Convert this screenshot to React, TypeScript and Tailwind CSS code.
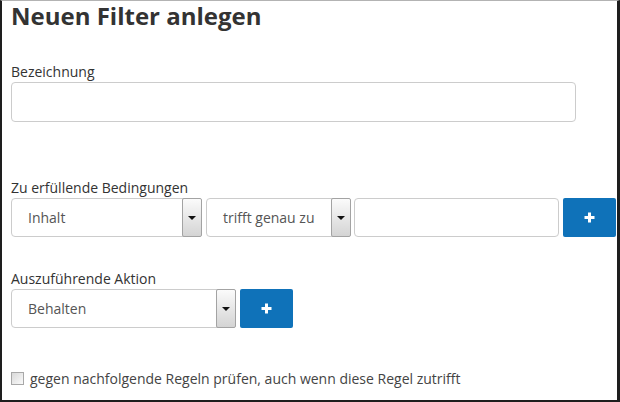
import type { ReactNode } from 'react';

function Arrow() {
  return (
    <div className="-my-px -mr-px flex w-[20px] items-center justify-center rounded-[2px] border border-[#a3a3a3] bg-linear-to-b from-[#fbfbfb] to-[#d4d4d4]">
      <div className="h-0 w-0 border-x-[4px] border-t-[4px] border-x-transparent border-t-[#111]" />
    </div>
  );
}

function Select({ value, width }: { value: string; width: string }) {
  return (
    <div className={`flex h-full rounded-[4px] border border-[#ccc] bg-white ${width}`}>
      <div className="flex flex-1 items-center pl-[16px] text-[14px] text-[#555]">{value}</div>
      <Arrow />
    </div>
  );
}

function PlusButton() {
  return (
    <button className="flex h-[39px] w-[53px] items-center justify-center rounded-[2px] bg-[#0f72b9]">
      <svg width="11" height="11" viewBox="0 0 11 11">
        <path d="M5.5 0.5v10M0.5 5.5h10" stroke="#fff" strokeWidth="3" />
      </svg>
    </button>
  );
}

function Label({ children, className }: { children: ReactNode; className: string }) {
  return <div className={`text-[14px] leading-[20px] text-[#333] ${className}`}>{children}</div>;
}

export default function App() {
  return (
    <div className="box-border h-[402px] w-[620px] overflow-hidden border-t border-r-[3px] border-b-2 border-l-2 border-t-[#b3b3b3] border-r-[#1e1e1e] border-b-[#1e1e1e] border-l-[#1e1e1e] bg-white pl-[9px] font-['Open_Sans',sans-serif]">
      <h1 className="text-[24px] leading-[30px] font-bold text-[#333]">Neuen Filter anlegen</h1>

      <Label className="mt-[31px]">Bezeichnung</Label>
      <input type="text" className="box-border h-[40px] w-[565px] rounded-[4px] border border-[#ccc] px-3 outline-none" />

      <Label className="mt-[56px]">Zu erfüllende Bedingungen</Label>
      <div className="flex h-[39px] items-stretch">
        <Select value="Inhalt" width="w-[191px]" />
        <div className="w-[4px]" />
        <Select value="trifft genau zu" width="w-[145px]" />
        <div className="w-[3px]" />
        <input type="text" className="box-border w-[205px] rounded-[4px] border border-[#ccc] px-3 outline-none" />
        <div className="w-[4px]" />
        <PlusButton />
      </div>

      <Label className="mt-[32px]">Auszuführende Aktion</Label>
      <div className="flex h-[39px] items-stretch gap-[4px]">
        <Select value="Behalten" width="w-[225px]" />
        <PlusButton />
      </div>

      <label className="mt-[40px] flex h-[20px] items-center text-[14px] text-[#444]">
        <span className="mr-[6px] box-border h-[13px] w-[13px] border border-[#a8a8a8] bg-linear-to-br from-[#d9d9d9] to-[#fafafa]" />
        gegen nachfolgende Regeln prüfen, auch wenn diese Regel zutrifft
      </label>
    </div>
  );
}
